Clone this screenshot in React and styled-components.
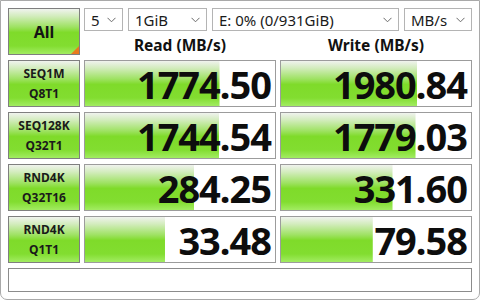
import React from "react";
import styled, { createGlobalStyle } from "styled-components";

const Global = createGlobalStyle`
  html, body { margin: 0; padding: 0; background: #ffffff; }
  * { box-sizing: border-box; }
`;

const GREEN = `linear-gradient(180deg, #f0f3ee 0%, #d2ecbc 16%, #9ee262 40%, #7fdb2a 52%, #82dd30 82%, #a2ec62 100%)`;

const Frame = styled.div`
  width: 480px;
  height: 300px;
  border: 1px solid #a9a9a9;
  border-radius: 0 0 7px 7px;
  padding: 7px 7px 7px 7px;
  display: flex;
  flex-direction: column;
  gap: 5px;
  font-family: "Noto Sans", "Open Sans", "DejaVu Sans", sans-serif;
  color: #111;
  background: #fff;
`;

const Top = styled.div`
  display: grid;
  grid-template-columns: 72px 388px;
  column-gap: 4px;
  height: 47px;
`;

const AllButton = styled.div`
  position: relative;
  border: 1px solid #7f7f7f;
  background: ${GREEN};
  display: flex;
  align-items: center;
  justify-content: center;
  font-weight: 700;
  font-size: 16px;
  color: #151515;
  overflow: hidden;
  &::after {
    content: "";
    position: absolute;
    right: 0;
    bottom: 0;
    border-style: solid;
    border-width: 0 0 8px 8px;
    border-color: transparent transparent #e97b1f transparent;
  }
`;

const Controls = styled.div`
  display: flex;
  flex-direction: column;
`;

const SelectRow = styled.div`
  display: flex;
  gap: 5px;
  height: 23px;
`;

const Select = styled.div`
  width: ${(p) => p.$w}px;
  height: 23px;
  border: 1px solid #b4b4b4;
  background: #fff;
  display: flex;
  align-items: center;
  justify-content: space-between;
  padding: 0 6px 0 6px;
  font-size: 15px;
  color: #1a1a1a;
  white-space: nowrap;
`;

const HeaderRow = styled.div`
  display: grid;
  grid-template-columns: 192px 192px;
  column-gap: 4px;
  height: 24px;
  align-items: center;
`;

const Header = styled.div`
  text-align: center;
  font-weight: 700;
  font-size: 15.5px;
  color: #111;
  padding-top: 3px;
`;

const Row = styled.div`
  display: grid;
  grid-template-columns: 72px 192px 192px;
  column-gap: 4px;
  height: 47px;
`;

const Label = styled.div`
  border: 1px solid #7f7f7f;
  background: ${GREEN};
  display: flex;
  flex-direction: column;
  align-items: center;
  justify-content: center;
  font-weight: 700;
  font-size: 12px;
  line-height: 20px;
  color: #1a1a1a;
`;

const Cell = styled.div`
  border: 1px solid #9c9c9c;
  background-color: #fff;
  background-image: ${GREEN};
  background-repeat: no-repeat;
  display: flex;
  align-items: center;
  justify-content: flex-end;
  padding-right: 4px;
  font-weight: 700;
  font-size: 38px;
  letter-spacing: -1px;
  color: #0d0d0d;
  line-height: 1;
`;

const Status = styled.div`
  height: 24px;
  border: 1px solid #8c8c8c;
  background: #fff;
`;

const Chevron = () => (
  <svg width="9" height="6" viewBox="0 0 9 6">
    <polyline points="0.5,0.8 4.5,4.8 8.5,0.8" fill="none" stroke="#6a6a6a" strokeWidth="1" />
  </svg>
);

const fill = (v) => Math.max(0, Math.min(1, Math.log10(v * 10) / 6));

const rows = [
  ["SEQ1M", "Q8T1", 1774.5, 1980.84],
  ["SEQ128K", "Q32T1", 1744.54, 1779.03],
  ["RND4K", "Q32T16", 284.25, 331.6],
  ["RND4K", "Q1T1", 33.48, 79.58],
];

const ValueCell = ({ v }) => (
  <Cell style={{ backgroundSize: `${(fill(v) * 100).toFixed(1)}% 100%` }}>
    {v.toFixed(2)}
  </Cell>
);

export default function App() {
  return (
    <>
      <Global />
      <Frame>
        <Top>
          <AllButton>All</AllButton>
          <Controls>
            <SelectRow>
              <Select $w={39}>5<Chevron /></Select>
              <Select $w={79}>1GiB<Chevron /></Select>
              <Select $w={187}>E: 0% (0/931GiB)<Chevron /></Select>
              <Select $w={68}>MB/s<Chevron /></Select>
            </SelectRow>
            <HeaderRow>
              <Header>Read (MB/s)</Header>
              <Header>Write (MB/s)</Header>
            </HeaderRow>
          </Controls>
        </Top>
        {rows.map(([a, b, r, w], i) => (
          <Row key={i}>
            <Label>
              <span>{a}</span>
              <span>{b}</span>
            </Label>
            <ValueCell v={r} />
            <ValueCell v={w} />
          </Row>
        ))}
        <Status />
      </Frame>
    </>
  );
}
